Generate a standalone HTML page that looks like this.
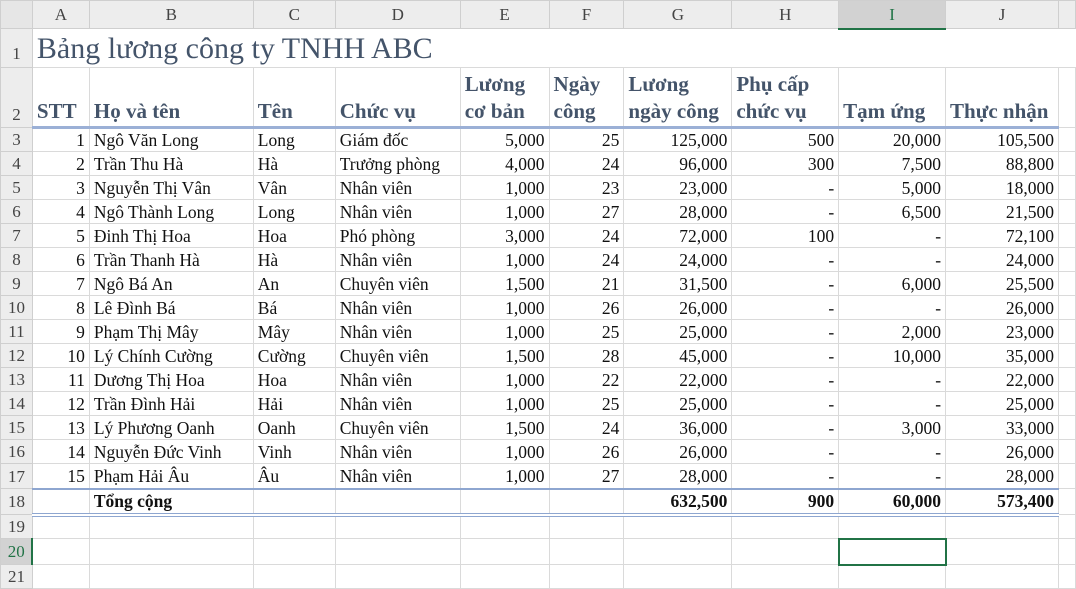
<!DOCTYPE html>
<html><head><meta charset="utf-8"><style>
body{margin:0;width:1076px;height:574px;overflow:hidden;background:#fff;font-family:"Liberation Serif",serif;}
table{border-collapse:collapse;table-layout:fixed;position:absolute;left:0;top:0;}
td{border:1px solid #dadada;padding:0 4px;font-size:17.5px;color:#111;white-space:nowrap;overflow:hidden;line-height:1;vertical-align:bottom;padding-bottom:2px}
td.h{background:#ededed;color:#444;text-align:center;border-color:#cfcfcf;font-size:17px;padding:0;vertical-align:middle}
td.hs{background:#d2d2d2;border-bottom:2px solid #217346;color:#217346}
td.hr{background:#d2d2d2;color:#217346;border-right:2px solid #217346}
.r{text-align:right}
.r1 td:not(.h){border-left:none;border-right:none}
.t{font-size:30px;color:#44546a;padding-bottom:3px}
.hd td:not(.h){font-weight:bold;color:#44546a;font-size:21px;padding-bottom:1px;border-bottom:3px solid #9bb0d6;line-height:27px}
.tot td:not(.h){font-weight:bold;border-top:2px solid #8ea6d0;border-bottom:4px double #8ea6d0}
.sel{outline:2px solid #217346;outline-offset:-1px}
</style></head><body>
<table>
<colgroup><col style="width:32px"><col style="width:57px"><col style="width:164px"><col style="width:82px"><col style="width:125px"><col style="width:89px"><col style="width:75px"><col style="width:108px"><col style="width:107px"><col style="width:107px"><col style="width:113px"><col style="width:17px"></colgroup>
<tr style="height:28px"><td class="h" style="background:#e6e6e6"></td><td class="h">A</td><td class="h">B</td><td class="h">C</td><td class="h">D</td><td class="h">E</td><td class="h">F</td><td class="h">G</td><td class="h">H</td><td class="h hs">I</td><td class="h">J</td><td class="h"></td></tr>
<tr class="r1" style="height:39px"><td class="h" style="vertical-align:bottom;padding-bottom:5px">1</td><td class="t" colspan="4">Bảng lương công ty TNHH ABC</td><td></td><td></td><td></td><td></td><td></td><td></td><td></td></tr>
<tr class="hd" style="height:60px"><td class="h" style="vertical-align:bottom;padding-bottom:4px">2</td><td>STT</td><td>Họ và tên</td><td>Tên</td><td>Chức vụ</td><td>Lương<br>cơ bản</td><td>Ngày<br>công</td><td>Lương<br>ngày công</td><td>Phụ cấp<br>chức vụ</td><td>Tạm ứng</td><td>Thực nhận</td><td style="border-bottom:1px solid #dadada"></td></tr>
<tr style="height:24px"><td class="h">3</td><td class="r">1</td><td>Ngô Văn Long</td><td>Long</td><td>Giám đốc</td><td class="r">5,000</td><td class="r">25</td><td class="r">125,000</td><td class="r">500</td><td class="r">20,000</td><td class="r">105,500</td><td></td></tr>
<tr style="height:24px"><td class="h">4</td><td class="r">2</td><td>Trần Thu Hà</td><td>Hà</td><td>Trưởng phòng</td><td class="r">4,000</td><td class="r">24</td><td class="r">96,000</td><td class="r">300</td><td class="r">7,500</td><td class="r">88,800</td><td></td></tr>
<tr style="height:24px"><td class="h">5</td><td class="r">3</td><td>Nguyễn Thị Vân</td><td>Vân</td><td>Nhân viên</td><td class="r">1,000</td><td class="r">23</td><td class="r">23,000</td><td class="r">-</td><td class="r">5,000</td><td class="r">18,000</td><td></td></tr>
<tr style="height:24px"><td class="h">6</td><td class="r">4</td><td>Ngô Thành Long</td><td>Long</td><td>Nhân viên</td><td class="r">1,000</td><td class="r">27</td><td class="r">28,000</td><td class="r">-</td><td class="r">6,500</td><td class="r">21,500</td><td></td></tr>
<tr style="height:24px"><td class="h">7</td><td class="r">5</td><td>Đinh Thị Hoa</td><td>Hoa</td><td>Phó phòng</td><td class="r">3,000</td><td class="r">24</td><td class="r">72,000</td><td class="r">100</td><td class="r">-</td><td class="r">72,100</td><td></td></tr>
<tr style="height:24px"><td class="h">8</td><td class="r">6</td><td>Trần Thanh Hà</td><td>Hà</td><td>Nhân viên</td><td class="r">1,000</td><td class="r">24</td><td class="r">24,000</td><td class="r">-</td><td class="r">-</td><td class="r">24,000</td><td></td></tr>
<tr style="height:24px"><td class="h">9</td><td class="r">7</td><td>Ngô Bá An</td><td>An</td><td>Chuyên viên</td><td class="r">1,500</td><td class="r">21</td><td class="r">31,500</td><td class="r">-</td><td class="r">6,000</td><td class="r">25,500</td><td></td></tr>
<tr style="height:24px"><td class="h">10</td><td class="r">8</td><td>Lê Đình Bá</td><td>Bá</td><td>Nhân viên</td><td class="r">1,000</td><td class="r">26</td><td class="r">26,000</td><td class="r">-</td><td class="r">-</td><td class="r">26,000</td><td></td></tr>
<tr style="height:24px"><td class="h">11</td><td class="r">9</td><td>Phạm Thị Mây</td><td>Mây</td><td>Nhân viên</td><td class="r">1,000</td><td class="r">25</td><td class="r">25,000</td><td class="r">-</td><td class="r">2,000</td><td class="r">23,000</td><td></td></tr>
<tr style="height:24px"><td class="h">12</td><td class="r">10</td><td>Lý Chính Cường</td><td>Cường</td><td>Chuyên viên</td><td class="r">1,500</td><td class="r">28</td><td class="r">45,000</td><td class="r">-</td><td class="r">10,000</td><td class="r">35,000</td><td></td></tr>
<tr style="height:24px"><td class="h">13</td><td class="r">11</td><td>Dương Thị Hoa</td><td>Hoa</td><td>Nhân viên</td><td class="r">1,000</td><td class="r">22</td><td class="r">22,000</td><td class="r">-</td><td class="r">-</td><td class="r">22,000</td><td></td></tr>
<tr style="height:24px"><td class="h">14</td><td class="r">12</td><td>Trần Đình Hải</td><td>Hải</td><td>Nhân viên</td><td class="r">1,000</td><td class="r">25</td><td class="r">25,000</td><td class="r">-</td><td class="r">-</td><td class="r">25,000</td><td></td></tr>
<tr style="height:24px"><td class="h">15</td><td class="r">13</td><td>Lý Phương Oanh</td><td>Oanh</td><td>Chuyên viên</td><td class="r">1,500</td><td class="r">24</td><td class="r">36,000</td><td class="r">-</td><td class="r">3,000</td><td class="r">33,000</td><td></td></tr>
<tr style="height:24px"><td class="h">16</td><td class="r">14</td><td>Nguyễn Đức Vinh</td><td>Vinh</td><td>Nhân viên</td><td class="r">1,000</td><td class="r">26</td><td class="r">26,000</td><td class="r">-</td><td class="r">-</td><td class="r">26,000</td><td></td></tr>
<tr style="height:25px"><td class="h">17</td><td class="r">15</td><td>Phạm Hải Âu</td><td>Âu</td><td>Nhân viên</td><td class="r">1,000</td><td class="r">27</td><td class="r">28,000</td><td class="r">-</td><td class="r">-</td><td class="r">28,000</td><td style="border-top:1px solid #dadada;border-bottom:1px solid #dadada"></td></tr>
<tr class="tot" style="height:26px"><td class="h">18</td><td></td><td>Tổng cộng</td><td></td><td></td><td></td><td></td><td class="r">632,500</td><td class="r">900</td><td class="r">60,000</td><td class="r">573,400</td><td style="font-weight:normal;border-top:1px solid #dadada;border-bottom:1px solid #dadada"></td></tr>
<tr style="height:24px"><td class="h">19</td><td></td><td></td><td></td><td></td><td></td><td></td><td></td><td></td><td></td><td></td><td></td></tr>
<tr style="height:26px"><td class="h hr">20</td><td></td><td></td><td></td><td></td><td></td><td></td><td></td><td></td><td class="sel"></td><td></td><td></td></tr>
<tr style="height:24px"><td class="h">21</td><td></td><td></td><td></td><td></td><td></td><td></td><td></td><td></td><td></td><td></td><td></td></tr>
</table>
</body></html>
